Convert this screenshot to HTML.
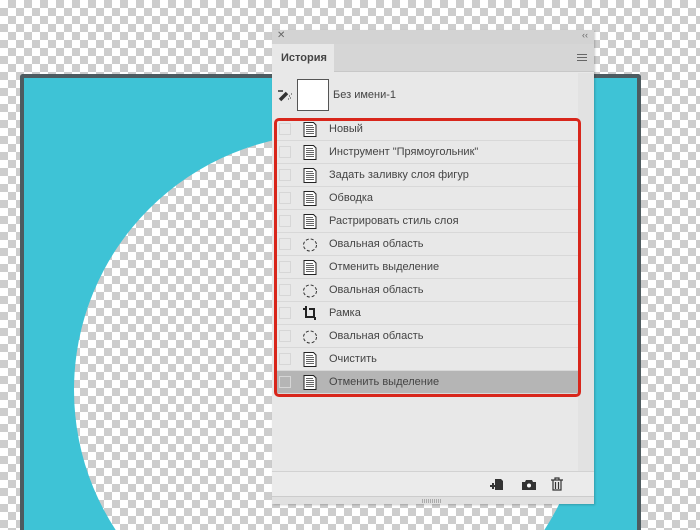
<!DOCTYPE html>
<html><head><meta charset="utf-8"><style>
*{margin:0;padding:0;box-sizing:border-box}
html,body{width:700px;height:530px;overflow:hidden}
body{position:relative;font-family:"Liberation Sans","DejaVu Sans",sans-serif;
background-color:#fff;background-image:linear-gradient(45deg,#cdcdcd 25%,transparent 25%,transparent 75%,#cdcdcd 75%),linear-gradient(45deg,#cdcdcd 25%,transparent 25%,transparent 75%,#cdcdcd 75%);background-size:16px 16px;background-position:0 0,8px 8px}
#wrap{position:absolute;left:0;top:0;width:700px;height:530px;overflow:hidden}
#canvas{position:absolute;left:20px;top:74px;width:621px;height:456px;border:4px solid #4d5b60;border-bottom:0;border-radius:3px 3px 0 0;background:#3ec3d6;overflow:hidden}
#hole{position:absolute;left:calc(330px - 256px - 24px);top:calc(390px - 256px - 78px);width:512px;height:512px;border-radius:50%;
background-color:#fff;background-image:linear-gradient(45deg,#cdcdcd 25%,transparent 25%,transparent 75%,#cdcdcd 75%),linear-gradient(45deg,#cdcdcd 25%,transparent 25%,transparent 75%,#cdcdcd 75%);background-size:16px 16px;background-position:-2px -2px,6px 6px}
#panel{position:absolute;left:272px;top:30px;width:322px;height:474px;background:#e8e8e8;box-shadow:1px 1px 2px rgba(0,0,0,.2)}
#topbar{position:absolute;left:0;top:0;width:322px;height:14px;background:#d3d3d3;font-size:10px;color:#666}
#tabrow{position:absolute;left:0;top:14px;width:322px;height:28px;background:#d6d6d6;border-bottom:1px solid #c8c8c8}
#tab{position:absolute;left:0;top:0;width:62px;height:29px;background:#e8e8e8;font-size:11px;font-weight:bold;color:#444;padding:8px 0 0 9px}
#scroll{position:absolute;left:306px;top:43px;width:16px;height:398px;background:#e2e2e2}
.row{position:absolute;left:4px;width:302px;height:23px;border-bottom:1px solid #d8d8d8;font-size:11px;color:#444}
.row .cb{position:absolute;left:3px;top:5px;width:12px;height:12px;border:1px solid #d6d6d6}
.row .t{position:absolute;left:53px;top:5px}
.row svg{position:absolute;left:26px;top:3px}
#red{position:absolute;left:2px;top:88px;width:307px;height:279px;border:3px solid #d8261b;border-radius:5px}
#footer{position:absolute;left:0;top:441px;width:322px;height:25px;background:#ebebeb;border-top:1px solid #d2d2d2}
#grip{position:absolute;left:0;top:466px;width:322px;height:8px;background:#e0e0e0;border-top:1px solid #ccc}
</style></head><body>
<div id="wrap">
<div id="canvas"><div id="hole"></div></div>
<div id="panel">
 <div id="topbar"><span style="position:absolute;left:5px;top:0">✕</span><span style="position:absolute;right:6px;top:0;font-size:9px">‹‹</span></div>
 <div id="tabrow"><div id="tab">История</div>
  <div style="position:absolute;right:7px;top:10px;width:10px;height:7px;border-top:1px solid #666;border-bottom:1px solid #666"><div style="margin-top:2px;height:1px;background:#666"></div></div></div>
 <div id="scroll"></div>
 <svg style="position:absolute;left:5px;top:57px" width="16" height="16" viewBox="0 0 16 16"><path d="M1 4h5" stroke="#333" stroke-width="1.5"/><path d="M3 13l7-7" stroke="#333" stroke-width="3.5"/><path d="M12 9h1M14 7h1M11 12h1M13 11h1" stroke="#333"/></svg>
 <div style="position:absolute;left:25px;top:49px;width:32px;height:32px;background:#fff;border:1px solid #555"></div>
 <div style="position:absolute;left:61px;top:59px;font-size:11px;color:#444">Без имени-1</div>
 <div id="rows"></div>
 <div id="red"></div>
 <div id="footer">
  <svg style="position:absolute;left:218px;top:6px" width="14" height="14" viewBox="0 0 14 14"><path d="M5 1h6l2 2v9H5z" fill="#333"/><path d="M0 8h6M3 5v6" stroke="#333" stroke-width="2"/></svg>
  <svg style="position:absolute;left:250px;top:7px" width="14" height="12" viewBox="0 0 14 12"><path d="M0 3h3l1-2h6l1 2h3v8H0z" fill="#333"/><circle cx="7" cy="6.5" r="2" fill="#fff"/></svg>
  <svg style="position:absolute;left:279px;top:5px" width="12" height="14" viewBox="0 0 12 14"><path d="M0 3h12M4 3V1h4v2M2 3v10h8V3M4.5 5v7M7.5 5v7" stroke="#333" stroke-width="1.2" fill="none"/></svg>
 </div>
 <div id="grip"><div style="position:absolute;left:150px;top:2px;width:20px;height:4px;background:repeating-linear-gradient(90deg,#aaa 0 1px,transparent 1px 2px)"></div></div>
</div>
</div>
<script>
var items=[["Новый","d"],["Инструмент \"Прямоугольник\"","d"],["Задать заливку слоя фигур","d"],["Обводка","d"],["Растрировать стиль слоя","d"],["Овальная область","o"],["Отменить выделение","d"],["Овальная область","o"],["Рамка","c"],["Овальная область","o"],["Очистить","d"],["Отменить выделение","d"]];
var icons={d:'<svg width="16" height="17" viewBox="0 0 16 17"><path d="M2 1.5h9.5l2.5 2.5v11.5h-12z" fill="#fff" stroke="#222" stroke-width="1"/><g stroke="#333" stroke-width="0.8"><path d="M4 4.5h7M4 6.5h8M4 8.5h8M4 10.5h8M4 12.5h8"/></g></svg>',
o:'<svg width="16" height="17" viewBox="0 0 16 17"><ellipse cx="8" cy="9" rx="6.5" ry="6" fill="none" stroke="#333" stroke-dasharray="3 2"/></svg>',
c:'<svg width="16" height="17" viewBox="0 0 16 17"><path d="M4 1v11h9M1 4h3M7 4h5v7M13 12v3" stroke="#222" stroke-width="2" fill="none"/></svg>'};
var h="";items.forEach(function(it,i){var top=88+i*23;var sel=i==11?"background:#b5b5b5;":"";
h+='<div class="row" style="top:'+top+'px;'+sel+'"><div class="cb"></div>'+icons[it[1]]+'<div class="t">'+it[0].replace(/"/g,"&quot;")+'</div></div>';});
document.getElementById("rows").innerHTML=h;
</script>
</body></html>
